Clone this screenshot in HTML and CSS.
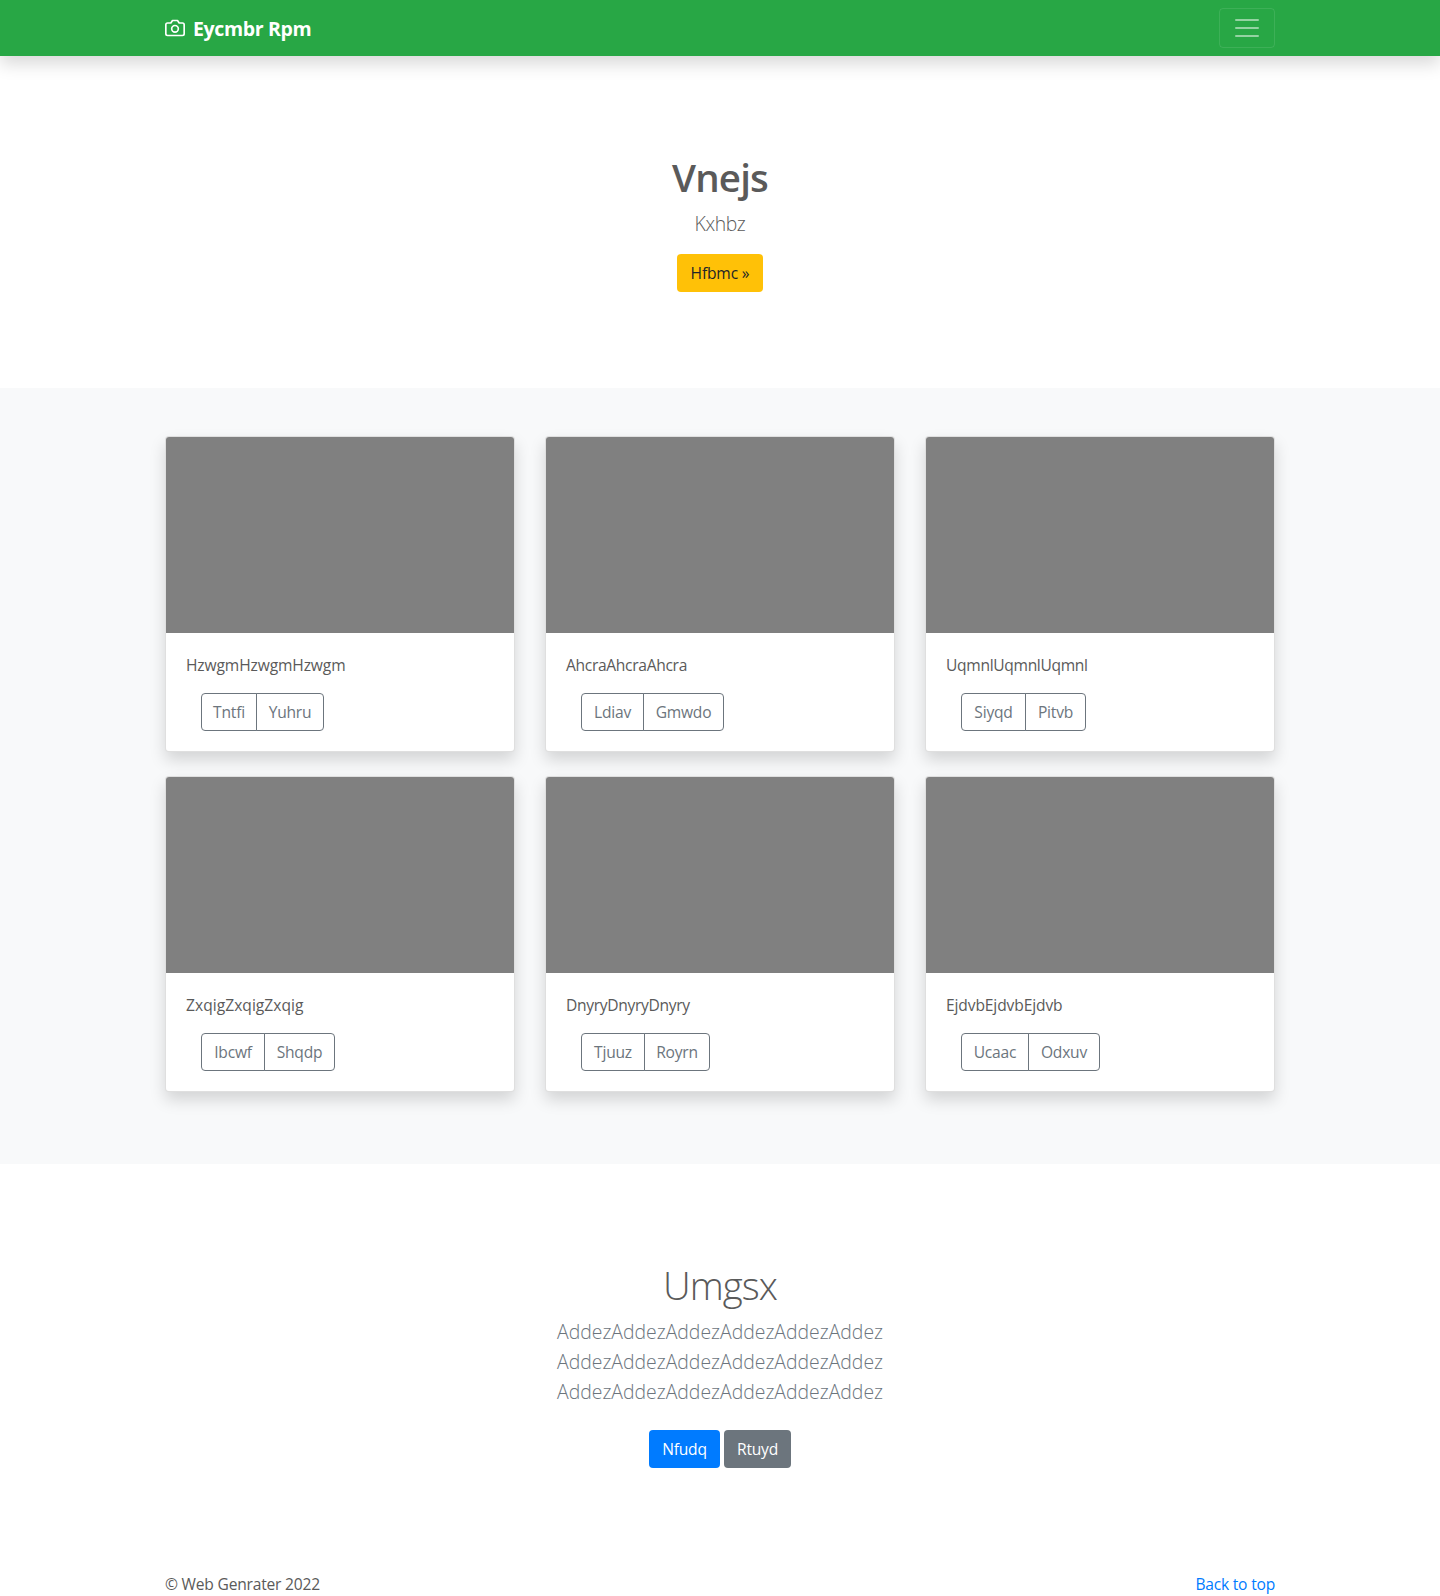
FILE: index.html
```html
<!DOCTYPE html>
<html lang="en">
<head>
<meta charset="utf-8">
<title>Eycmbr Rpm</title>
<link rel="stylesheet" href="styles.css">
</head>
<body>
<header class="navbar">
  <div class="container navbar-inner">
    <a class="brand" href="#">
      <svg class="brand-icon" width="20" height="20" viewBox="0 0 24 24" fill="none" stroke="currentColor" stroke-width="2" stroke-linecap="round" stroke-linejoin="round"><path d="M23 19a2 2 0 0 1-2 2H3a2 2 0 0 1-2-2V8a2 2 0 0 1 2-2h4l2-3h6l2 3h4a2 2 0 0 1 2 2z"/><circle cx="12" cy="13" r="4"/></svg>
      <strong class="brand-name">Eycmbr Rpm</strong>
    </a>
    <button class="toggler" type="button" aria-label="Toggle navigation">
      <svg width="30" height="30" viewBox="0 0 30 30" fill="none" stroke="rgba(255,255,255,.5)" stroke-width="2" stroke-linecap="round"><path d="M4 7h22M4 15h22M4 23h22"/></svg>
    </button>
  </div>
</header>
<main>
  <section class="hero">
    <h1 class="hero-title">Vnejs</h1>
    <p class="lead hero-lead">Kxhbz</p>
    <a class="btn btn-warning" href="#">Hfbmc »</a>
  </section>
  <section class="album">
    <div class="container card-grid">
      <article class="card">
        <div class="card-image"></div>
        <div class="card-body">
          <p class="card-text snug">HzwgmHzwgmHzwgm</p>
          <div class="btn-group"><button class="btn-outline w56">Tntfi</button><button class="btn-outline w68">Yuhru</button></div>
        </div>
      </article>
      <article class="card">
        <div class="card-image"></div>
        <div class="card-body">
          <p class="card-text">AhcraAhcraAhcra</p>
          <div class="btn-group"><button class="btn-outline w63">Ldiav</button><button class="btn-outline w81">Gmwdo</button></div>
        </div>
      </article>
      <article class="card">
        <div class="card-image"></div>
        <div class="card-body">
          <p class="card-text">UqmnlUqmnlUqmnl</p>
          <div class="btn-group"><button class="btn-outline w65">Siyqd</button><button class="btn-outline w61">Pitvb</button></div>
        </div>
      </article>
      <article class="card">
        <div class="card-image"></div>
        <div class="card-body">
          <p class="card-text loose">ZxqigZxqigZxqig</p>
          <div class="btn-group"><button class="btn-outline w64">Ibcwf</button><button class="btn-outline w71">Shqdp</button></div>
        </div>
      </article>
      <article class="card">
        <div class="card-image"></div>
        <div class="card-body">
          <p class="card-text">DnyryDnyryDnyry</p>
          <div class="btn-group"><button class="btn-outline w64">Tjuuz</button><button class="btn-outline w66">Royrn</button></div>
        </div>
      </article>
      <article class="card">
        <div class="card-image"></div>
        <div class="card-body">
          <p class="card-text snug">EjdvbEjdvbEjdvb</p>
          <div class="btn-group"><button class="btn-outline w68">Ucaac</button><button class="btn-outline w72">Odxuv</button></div>
        </div>
      </article>
    </div>
  </section>
  <section class="about">
    <h2 class="about-title">Umgsx</h2>
    <p class="lead about-lead">AddezAddezAddezAddezAddezAddez<br>AddezAddezAddezAddezAddezAddez<br>AddezAddezAddezAddezAddezAddez</p>
    <div class="actions">
      <a class="btn btn-primary" href="#">Nfudq</a>
      <a class="btn btn-secondary" href="#">Rtuyd</a>
    </div>
  </section>
</main>
<footer class="container footer">
  <span>© Web Genrater 2022</span>
  <a class="top-link" href="#">Back to top</a>
</footer>
</body>
</html>
```
FILE: styles.css
```css
*, *::before, *::after { box-sizing: border-box; }
body {
  margin: 0;
  font: 400 15.6px/24px "Open Sans", sans-serif;
  letter-spacing: -.21px;
  color: #5a5a5a;
  background: #fff;
}
a { text-decoration: none; }
h1, h2, p { margin: 0; }
.container { width: 1140px; margin: 0 auto; padding: 0 15px; }

.navbar {
  position: relative;
  height: 56px;
  background: #28a745;
  box-shadow: 0 8px 16px rgba(0, 0, 0, .15);
}
.navbar-inner { display: flex; height: 56px; align-items: center; justify-content: space-between; }
.brand { display: flex; align-items: center; gap: 8px; color: #fff; }
.brand-name { font-size: 19.5px; font-weight: 700; line-height: 30px; letter-spacing: -.35px; padding-top: 1px; }
.toggler {
  display: flex;
  align-items: center;
  justify-content: center;
  width: 56px;
  height: 40px;
  padding: 0;
  background: transparent;
  border: 1px solid rgba(255, 255, 255, .1);
  border-radius: 4px;
}

.hero { display: flex; flex-direction: column; align-items: center; height: 332px; padding: 96px 0; }
.hero-title { font-size: 38.5px; font-weight: 600; line-height: 48px; letter-spacing: -.85px; padding-top: 1px; margin-bottom: 8px; }
.lead { font-size: 19.4px; font-weight: 300; line-height: 30px; }
.hero-lead { margin-bottom: 15px; letter-spacing: -.4px; }

.btn {
  display: flex;
  align-items: center;
  justify-content: center;
  height: 38px;
  border-radius: 4px;
  color: #fff;
}
.btn-warning { width: 86px; background: #ffc107; color: #212529; letter-spacing: -.15px; }
.btn-primary { width: 71px; background: #007bff; }
.btn-secondary { width: 67px; background: #6c757d; }

.album { padding: 48px 0 72px; background: #f8f9fa; }
.card-grid { display: grid; grid-template-columns: repeat(3, 350px); gap: 24px 30px; }
.card {
  height: 316px;
  overflow: hidden;
  background: #fff;
  background-clip: border-box;
  border: 1px solid rgba(0, 0, 0, .125);
  border-radius: 4px;
  box-shadow: 0 8px 16px rgba(0, 0, 0, .15);
}
.card-image { height: 196px; background: #808080; }
.card-body { padding: 20px; }
.card-text { margin-bottom: 16px; letter-spacing: -.32px; }
.card-text.snug { letter-spacing: -.13px; }
.card-text.loose { letter-spacing: .03px; }
.btn-group { display: flex; margin-left: 15px; }
.btn-outline {
  height: 38px;
  padding: 0;
  font: inherit;
  letter-spacing: inherit;
  color: #6c757d;
  background: transparent;
  border: 1px solid #6c757d;
  border-radius: 4px;
}
.btn-outline:first-child { border-top-right-radius: 0; border-bottom-right-radius: 0; }
.btn-outline:last-child { margin-left: -1px; border-top-left-radius: 0; border-bottom-left-radius: 0; }
.w56 { width: 56px; }
.w61 { width: 61px; }
.w63 { width: 63px; }
.w64 { width: 64px; }
.w65 { width: 65px; }
.w66 { width: 66px; }
.w68 { width: 68px; }
.w71 { width: 71px; }
.w72 { width: 72px; }
.w81 { width: 81px; }

.about { height: 408px; padding-top: 96px; text-align: center; }
.about-title { font-size: 38.5px; font-weight: 300; line-height: 48px; letter-spacing: -.95px; padding-top: 1px; margin-bottom: 8px; }
.about-lead { margin-bottom: 23px; letter-spacing: 0; color: #6c757d; }
.actions { display: flex; justify-content: center; gap: 4px; }

.footer { display: flex; justify-content: space-between; height: 24px; }
.top-link { color: #007bff; }
```
